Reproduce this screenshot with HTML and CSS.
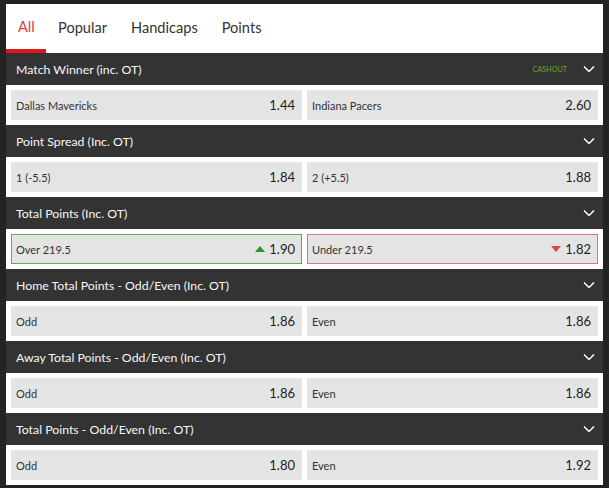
FILE: index.html
```html
<!DOCTYPE html>
<html lang="en">
<head>
    <meta charset="UTF-8">
    <title>Markets</title>
    <link rel="stylesheet" href="styles.css">
</head>
<body>
    <div class="frame">
        <div class="tabs">
            <div class="tab active">All</div>
            <div class="tab">Popular</div>
            <div class="tab">Handicaps</div>
            <div class="tab">Points</div>
        </div>

        <div class="market">
            <div class="market-head">
                <span>Match Winner (inc. OT)</span>
                <span class="cashout">CASHOUT</span>
                <svg class="chevron" width="12" height="8" viewBox="0 0 12 8"><path d="M1 1.5l5 5 5-5" fill="none" stroke="#fff" stroke-width="1.5"/></svg>
            </div>
            <div class="row">
                <div class="cell"><span class="name">Dallas Mavericks</span><span class="odds">1.44</span></div>
                <div class="cell"><span class="name">Indiana Pacers</span><span class="odds">2.60</span></div>
            </div>
        </div>

        <div class="market">
            <div class="market-head">
                <span>Point Spread (Inc. OT)</span>
                <svg class="chevron" width="12" height="8" viewBox="0 0 12 8"><path d="M1 1.5l5 5 5-5" fill="none" stroke="#fff" stroke-width="1.5"/></svg>
            </div>
            <div class="row">
                <div class="cell"><span class="name">1 (-5.5)</span><span class="odds">1.84</span></div>
                <div class="cell"><span class="name">2 (+5.5)</span><span class="odds">1.88</span></div>
            </div>
        </div>

        <div class="market">
            <div class="market-head">
                <span>Total Points (Inc. OT)</span>
                <svg class="chevron" width="12" height="8" viewBox="0 0 12 8"><path d="M1 1.5l5 5 5-5" fill="none" stroke="#fff" stroke-width="1.5"/></svg>
            </div>
            <div class="row">
                <div class="cell up"><span class="name">Over 219.5</span><span class="odds"><i class="arrow-up"></i>1.90</span></div>
                <div class="cell down"><span class="name">Under 219.5</span><span class="odds"><i class="arrow-down"></i>1.82</span></div>
            </div>
        </div>

        <div class="market">
            <div class="market-head">
                <span>Home Total Points - Odd/Even (Inc. OT)</span>
                <svg class="chevron" width="12" height="8" viewBox="0 0 12 8"><path d="M1 1.5l5 5 5-5" fill="none" stroke="#fff" stroke-width="1.5"/></svg>
            </div>
            <div class="row">
                <div class="cell"><span class="name">Odd</span><span class="odds">1.86</span></div>
                <div class="cell"><span class="name">Even</span><span class="odds">1.86</span></div>
            </div>
        </div>

        <div class="market">
            <div class="market-head">
                <span>Away Total Points - Odd/Even (Inc. OT)</span>
                <svg class="chevron" width="12" height="8" viewBox="0 0 12 8"><path d="M1 1.5l5 5 5-5" fill="none" stroke="#fff" stroke-width="1.5"/></svg>
            </div>
            <div class="row">
                <div class="cell"><span class="name">Odd</span><span class="odds">1.86</span></div>
                <div class="cell"><span class="name">Even</span><span class="odds">1.86</span></div>
            </div>
        </div>

        <div class="market">
            <div class="market-head">
                <span>Total Points - Odd/Even (Inc. OT)</span>
                <svg class="chevron" width="12" height="8" viewBox="0 0 12 8"><path d="M1 1.5l5 5 5-5" fill="none" stroke="#fff" stroke-width="1.5"/></svg>
            </div>
            <div class="row">
                <div class="cell"><span class="name">Odd</span><span class="odds">1.80</span></div>
                <div class="cell"><span class="name">Even</span><span class="odds">1.92</span></div>
            </div>
        </div>
    </div>
</body>
</html>
```
FILE: styles.css
```css
body {
    margin: 0;
    background: #232323;
    font-family: Lato, "Open Sans", sans-serif;
    height: 488px;
    overflow: hidden;
}
.frame {
    margin: 4px 6px 0 6px;
    width: 597px;
    background: white;
}
.tabs {
    display: flex;
    height: 49px;
    background: white;
}
.tab {
    padding: 0 12px;
    font-size: 14.6px;
    line-height: 47px;
    color: #333;
    box-sizing: border-box;
    height: 49px;
}
.tab.active {
    color: #d9413f;
    border-bottom: 4px solid #e1161b;
    line-height: 45px;
    width: 40px;
}
.market-head {
    display: flex;
    align-items: center;
    height: 32px;
    background: #333;
    color: #f7f7f7;
    font-size: 12.3px;
    padding: 0 7px 0 10px;
}
.market-head span:first-child {
    flex: 1;
}
.cashout {
    color: #6aa629;
    font-size: 7.2px;
    margin-right: 16px;
}
.chevron {
    margin-right: 1px;
}
.row {
    display: flex;
    gap: 5px;
    padding: 5px 5px;
}
.cell {
    flex: 1;
    height: 30px;
    background: #e4e4e4;
    display: flex;
    align-items: center;
    justify-content: space-between;
    padding: 0 7px 0 5px;
    box-sizing: border-box;
}
.cell.up {
    border: 1px solid #55b05a;
    padding: 0 6px 0 4px;
}
.cell.down {
    border: 1px solid #e07477;
    padding: 0 6px 0 4px;
}
.name {
    font-size: 11px;
    color: #333;
}
.odds {
    font-size: 13px;
    color: #222;
    display: flex;
    align-items: center;
}
.arrow-up {
    width: 0;
    height: 0;
    border-left: 5px solid transparent;
    border-right: 5px solid transparent;
    border-bottom: 6px solid #1d9b2e;
    margin-right: 4px;
}
.arrow-down {
    width: 0;
    height: 0;
    border-left: 5px solid transparent;
    border-right: 5px solid transparent;
    border-top: 6px solid #e0454b;
    margin-right: 4px;
}
```
